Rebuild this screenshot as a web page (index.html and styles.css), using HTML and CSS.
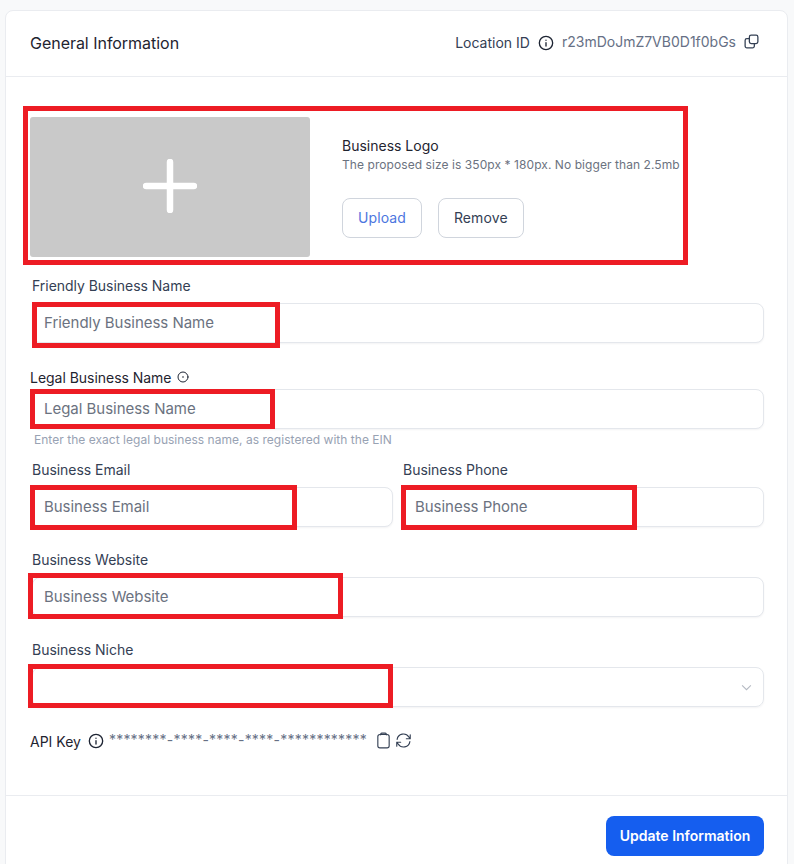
FILE: index.html
```html
<!DOCTYPE html>
<html lang="en">
<head>
<meta charset="utf-8">
<title>General Information</title>
<link rel="stylesheet" href="styles.css">
</head>
<body>
<main class="card">
  <header class="card-head">
    <h1 class="title">General Information</h1>
    <div class="loc">
      <span class="loc-label">Location ID</span>
      <svg class="ic ic-info" viewBox="0 0 24 24"><circle cx="12" cy="12" r="10"/><path d="M12 11.500v5M12 7.600v.4"/></svg>
      <span class="loc-id">r23mDoJmZ7VB0D1f0bGs</span>
      <svg class="ic ic-copy" viewBox="0 0 24 24"><rect x="9" y="3" width="12" height="12" rx="2.500"/><path d="M9 8H5.500A2.500 2.500 0 0 0 3 10.500V18.500A2.500 2.500 0 0 0 5.500 21H13.500A2.500 2.500 0 0 0 16 18.500V15"/></svg>
    </div>
  </header>

  <div class="card-body">
    <section class="logo-row">
      <div class="logo-drop">
        <svg class="plus" viewBox="0 0 54 54"><path d="M27 3v48M3 27h48"/></svg>
      </div>
      <div class="logo-info">
        <div class="logo-title">Business Logo</div>
        <div class="logo-hint">The proposed size is 350px * 180px. No bigger than 2.5mb</div>
        <div class="logo-btns">
          <button class="btn btn-upload">Upload</button>
          <button class="btn btn-remove">Remove</button>
        </div>
      </div>
    </section>

    <div class="field field-friendly">
      <label class="label">Friendly Business Name</label>
      <input class="input" placeholder="Friendly Business Name">
    </div>

    <div class="field field-legal">
      <label class="label label-legal">Legal Business Name
        <svg class="ic ic-small" viewBox="0 0 24 24"><circle cx="12" cy="12" r="10"/><path d="M12 11v2"/></svg>
      </label>
      <input class="input" placeholder="Legal Business Name">
      <p class="hint">Enter the exact legal business name, as registered with the EIN</p>
    </div>

    <div class="two">
      <div class="field">
        <label class="label">Business Email</label>
        <input class="input" placeholder="Business Email">
      </div>
      <div class="field">
        <label class="label">Business Phone</label>
        <input class="input" placeholder="Business Phone">
      </div>
    </div>

    <div class="field field-web">
      <label class="label">Business Website</label>
      <input class="input" placeholder="Business Website">
    </div>

    <div class="field field-niche">
      <label class="label">Business Niche</label>
      <div class="select">
        <svg class="chev" viewBox="0 0 12 8"><path d="M1 1.500l5 5 5-5"/></svg>
      </div>
    </div>

    <div class="api">
      <span class="api-label">API Key</span>
      <svg class="ic ic-info" viewBox="0 0 24 24"><circle cx="12" cy="12" r="10"/><path d="M12 11.500v5M12 7.600v.4"/></svg>
      <span class="api-key">********-****-****-****-************</span>
      <svg class="ic ic-clip" viewBox="0 0 24 24"><rect x="4" y="3.500" width="16" height="19" rx="3"/><path d="M8 4V3a1.500 1.500 0 0 1 1.500-1.500h5A1.500 1.500 0 0 1 16 3v1"/></svg>
      <svg class="ic ic-refresh" viewBox="0 0 24 24"><path d="M3 10.500A9 9 0 0 1 19.500 7l2 2.500M21.500 4v5.500H16M21 13.500A9 9 0 0 1 4.500 17l-2-2.500M2.500 20v-5.500H8"/></svg>
    </div>
  </div>

  <footer class="card-foot">
    <button class="btn-primary">Update Information</button>
  </footer>
</main>

<div class="mark mark-logo"></div>
<div class="mark mark-friendly"></div>
<div class="mark mark-legal"></div>
<div class="mark mark-email"></div>
<div class="mark mark-phone"></div>
<div class="mark mark-web"></div>
<div class="mark mark-niche"></div>
</body>
</html>
```

FILE: styles.css
```css
* { box-sizing: border-box; }
html, body { margin: 0; height: 864px; overflow: hidden; }
body {
  position: relative;
  background: #f8f9fa;
  font-family: Inter, "Liberation Sans", sans-serif;
  color: #1f2937;
  padding: 10px 6px 0 5px;
}
.card {
  background: #fff;
  border: 1px solid #eaecf0;
  border-radius: 8px 8px 0 0;
  height: 870px;
}
.card-head {
  height: 66px;
  border-bottom: 1px solid #eaecf0;
  display: flex;
  align-items: center;
  justify-content: space-between;
  padding: 0 27px 2px 24px;
}
.title { margin: 0; font-size: 16px; font-weight: 400; color: #1f2430; letter-spacing: -.03px; }
.loc { display: flex; align-items: center; font-size: 14px; }
.loc-label { color: #344054; }
.loc-id { color: #667085; margin: -2px 7px 0 8px; font-size: 14px; }
.ic { fill: none; stroke: #1d2433; stroke-width: 2; stroke-linecap: round; stroke-linejoin: round; flex: none; }
.ic-info { width: 16px; height: 16px; margin-left: 8px; }
.ic-copy { width: 17px; height: 17px; margin-top: -2px; stroke: #344054; stroke-width: 1.800; }
.card-body { padding: 40px 23px 0 24px; height: 719px; border-bottom: 1px solid #eaecf0; }
.logo-row { display: flex; height: 140px; }
.logo-drop {
  width: 280px; height: 140px;
  background: #c9c9c9;
  border-radius: 3px;
  display: flex; align-items: center; justify-content: center;
  padding-bottom: 3px;
}
.plus { width: 54px; height: 54px; fill: none; stroke: #fff; stroke-width: 6.500px; stroke-linecap: round; }
.logo-info { margin-left: 32px; padding-top: 20px; }
.logo-title { font-size: 14px; line-height: 17px; color: #1f2430; }
.logo-hint { font-size: 12px; line-height: 16px; margin-top: 3px; color: #6b7280; letter-spacing: .07px; }
.logo-btns { display: flex; gap: 16px; margin-top: 25px; }
.btn {
  height: 40px;
  background: #fff;
  border: 1px solid #d0d5dd;
  border-radius: 8px;
  font: 400 14px Inter, sans-serif;
  letter-spacing: .1px;
  padding: 0 15px 2px;
}
.btn-upload { color: #4c76e0; }
.btn-remove { color: #344054; }
.field { display: flex; flex-direction: column; }
.label { display: block; font-size: 14px; line-height: 20px; color: #344054; margin-bottom: 7px; letter-spacing: -.03px; }
.field-friendly { margin: 19px 0 0 2px; }
.field-legal { margin-top: 25px; }
.label-legal { display: flex; align-items: center; gap: 5px; color: #1f2430; margin-bottom: 1px; }
.ic-small { width: 12px; height: 12px; margin-top: -2px; }
.field-legal .input { margin-left: 2px; width: calc(100% - 2px); }
.hint { margin: 3px 0 0 4px; font-size: 12px; line-height: 16px; color: #98a2b3; letter-spacing: .03px; }
.input {
  display: block;
  width: 100%;
  height: 40px;
  border: 1px solid #e4e7ec;
  border-radius: 8px;
  padding: 0 11px 2px;
  font: 400 15px Inter, sans-serif;
  letter-spacing: -.03px;
  box-shadow: 0 1px 2px rgba(16, 24, 40, .05);
}
.input::placeholder { color: #6b7280; opacity: 1; }
.two { display: grid; grid-template-columns: 361px 361px; gap: 10px; margin: 12px 0 0 2px; }
.field-web { margin: 23px 0 0 2px; }
.field-niche { margin: 23px 0 0 2px; }
.select {
  height: 40px;
  border: 1px solid #e4e7ec;
  border-radius: 8px;
  display: flex; align-items: center; justify-content: flex-end;
  padding-right: 11px;
  box-shadow: 0 1px 2px rgba(16, 24, 40, .05);
}
.chev { width: 11px; height: 7px; fill: none; stroke: #b4b9c2; stroke-width: 1.200; }
.api { display: flex; align-items: center; margin-top: 24px; height: 20px; }
.api-label { font-size: 14px; color: #1f2430; }
.api .ic-info { margin-left: 7px; }
.api-key { font-size: 14px; color: #667085; margin: -4px 0 0 5px; letter-spacing: .22px; }
.ic-clip { width: 17px; height: 17px; margin: -2px 0 0 8px; stroke: #344054; stroke-width: 1.600; }
.ic-refresh { width: 17px; height: 17px; margin: -2px 0 0 3px; stroke: #344054; stroke-width: 1.600; }
.card-foot { display: flex; justify-content: flex-end; padding: 20px 23px 0 0; }
.btn-primary {
  height: 40px; width: 158px;
  background: #155eef;
  color: #fff;
  border: 0;
  border-radius: 8px;
  padding: 0 0 2px;
  font: 600 14px Inter, sans-serif;
}
.mark { position: absolute; border: 5px solid #ed1c24; }
.mark-logo { left: 23px; top: 106px; width: 665px; height: 159px; }
.mark-friendly { left: 32px; top: 302px; width: 248px; height: 46px; }
.mark-legal { left: 30px; top: 389px; width: 245px; height: 40px; }
.mark-email { left: 30px; top: 485px; width: 267px; height: 45px; }
.mark-phone { left: 401px; top: 485px; width: 236px; height: 45px; }
.mark-web { left: 28px; top: 573px; width: 315px; height: 46px; }
.mark-niche { left: 28px; top: 664px; width: 365px; height: 44px; }
```
